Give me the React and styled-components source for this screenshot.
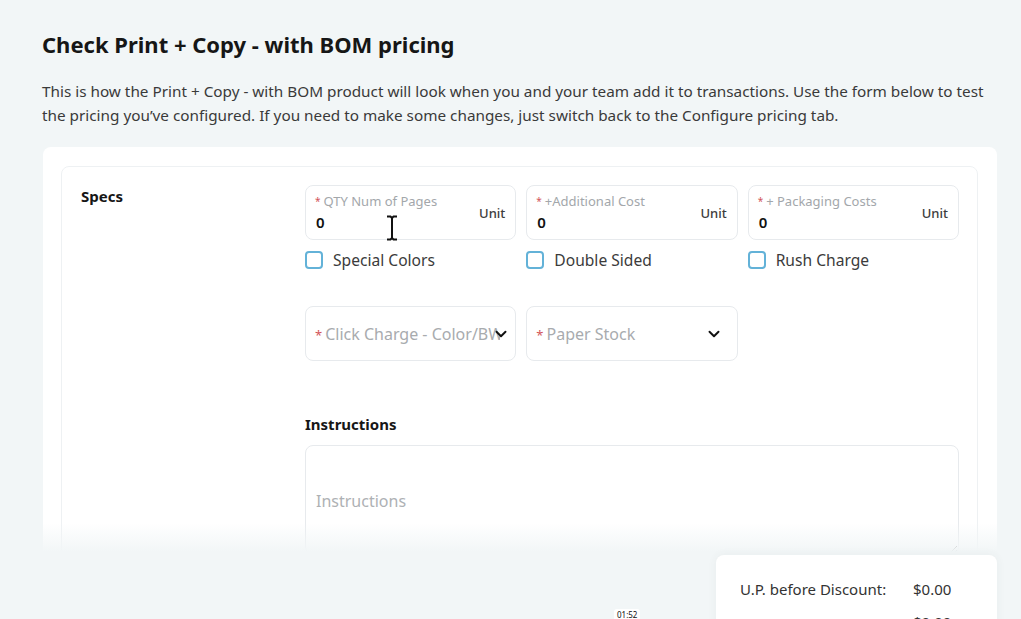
import React from 'react'
import styled, { createGlobalStyle } from 'styled-components'
import { ChevronDown } from 'lucide-react'

const GlobalStyle = createGlobalStyle`
  html, body {
    margin: 0;
    padding: 0;
    background: #f2f6f7;
  }
  body {
    font-family: "Noto Sans", "Liberation Sans", Arial, sans-serif;
    color: #1c1c1c;
  }
  * {
    box-sizing: border-box;
  }
`

const fields = [
  { label: 'QTY Num of Pages', value: '0', cursor: true },
  { label: '+Additional Cost', value: '0' },
  { label: '+ Packaging Costs', value: '0' }
]

const options = ['Special Colors', 'Double Sided', 'Rush Charge']

const selects = [
  { label: 'Click Charge - Color/BW', tight: true },
  { label: 'Paper Stock' }
]

class App extends React.Component {
  render() {
    return (
      <Page>
        <GlobalStyle />
        <Title>Check Print + Copy - with BOM pricing</Title>
        <Intro>
          This is how the Print + Copy - with BOM product will look when you and your team add it to
          transactions. Use the form below to test the pricing you’ve configured. If you need to make
          some changes, just switch back to the Configure pricing tab.
        </Intro>

        <Card>
          <Section>
            <SectionLabel>Specs</SectionLabel>
            <Form>
              <Row>
                {fields.map(f => (
                  <Field key={f.label}>
                    <FieldText>
                      <FieldLabel>
                        <Req>*</Req>
                        {f.label}
                      </FieldLabel>
                      <FieldValue>{f.value}</FieldValue>
                    </FieldText>
                    <Unit>Unit</Unit>
                    {f.cursor && (
                      <Cursor width="14" height="26" viewBox="0 0 14 26">
                        <path
                          d="M2 1.5h3.5L7 3l1.5-1.5H12M7 3v20M2 24.5h3.5L7 23l1.5 1.5H12"
                          fill="none"
                          stroke="#111"
                          strokeWidth="2"
                        />
                      </Cursor>
                    )}
                  </Field>
                ))}
              </Row>

              <Row $top="10px">
                {options.map(o => (
                  <Check key={o}>
                    <Box />
                    {o}
                  </Check>
                ))}
              </Row>

              <Row $top="36px">
                {selects.map(s => (
                  <Select key={s.label} $tight={s.tight}>
                    <SelectText>
                      <Req $big>*</Req>
                      {s.label}
                    </SelectText>
                    <ChevronDown size={18} strokeWidth={2.6} color="#111" />
                  </Select>
                ))}
              </Row>

              <SubTitle>Instructions</SubTitle>
              <Notes placeholder="Instructions" />
            </Form>
          </Section>
        </Card>

        <Summary>
          <SummaryRow>
            <span>U.P. before Discount:</span>
            <span>$0.00</span>
          </SummaryRow>
          <SummaryRow>
            <span />
            <span>$0.00</span>
          </SummaryRow>
        </Summary>

        <Clock>01:52</Clock>
      </Page>
    )
  }
}

export default App

const Page = styled.div`
  position: relative;
  height: 100vh;
  overflow: hidden;
  padding: 30px 24px 0 42px;
`

const Title = styled.h1`
  margin: 0;
  font-size: 22px;
  line-height: 28px;
  font-weight: 700;
  color: #161616;
`

const Intro = styled.p`
  margin: 21px 0 0;
  font-size: 15.3px;
  line-height: 24px;
  color: #3a3a3a;
`

const Card = styled.div`
  position: relative;
  margin: 20px 0 0 1px;
  height: 408px;
  overflow: hidden;
  background: #fff;
  border-radius: 8px 8px 0 0;
  padding: 19px 19px 0 18px;

  &::after {
    content: '';
    position: absolute;
    left: 0;
    right: 0;
    bottom: 0;
    height: 32px;
    background: linear-gradient(to bottom, rgba(242, 246, 247, 0), #f2f6f7 90%);
  }
`

const Section = styled.div`
  display: grid;
  grid-template-columns: 224px 1fr;
  border: 1px solid #eef1f3;
  border-radius: 8px;
  padding: 18px 18px 40px 19px;
`

const SectionLabel = styled.div`
  font-size: 15px;
  font-weight: 700;
  line-height: 22px;
  color: #161616;
`

const Form = styled.div`
  display: flex;
  flex-direction: column;
  min-width: 0;
`

const Row = styled.div`
  display: grid;
  grid-template-columns: repeat(3, minmax(0, 1fr));
  column-gap: 10px;
  margin-top: ${p => p.$top || '0'};
`

const Field = styled.div`
  position: relative;
  height: 55px;
  display: flex;
  align-items: center;
  justify-content: space-between;
  border: 1px solid #e7eaed;
  border-radius: 8px;
  padding: 0 10px 0 9px;
`

const FieldText = styled.div`
  display: flex;
  flex-direction: column;
  gap: 3px;
`

const FieldLabel = styled.div`
  font-size: 13px;
  line-height: 17px;
  color: #a3a7ab;
`

const Req = styled.span`
  color: #d2555a;
  font-size: ${p => (p.$big ? '13px' : '10px')};
  margin-right: 3px;
  vertical-align: ${p => (p.$big ? 'baseline' : '1px')};
`

const FieldValue = styled.div`
  font-size: 15px;
  line-height: 19px;
  font-weight: 600;
  color: #111;
  padding-left: 1px;
`

const Unit = styled.div`
  font-size: 13px;
  font-weight: 500;
  color: #3d3d3d;
`

const Cursor = styled.svg`
  position: absolute;
  left: 79px;
  top: 29px;
`

const Check = styled.label`
  display: flex;
  align-items: center;
  gap: 10px;
  height: 20px;
  font-size: 15.6px;
  color: #3b3b3b;
`

const Box = styled.span`
  width: 18px;
  height: 18px;
  border: 2px solid #63b2d8;
  border-radius: 4px;
  background: #fff;
`

const Select = styled.div`
  display: flex;
  align-items: center;
  height: 55px;
  border: 1px solid #e7eaed;
  border-radius: 8px;
  padding: 0 ${p => (p.$tight ? '5px' : '14px')} 0 9px;

  svg {
    flex-shrink: 0;
    margin-left: ${p => (p.$tight ? '-8px' : '0')};
  }
`

const SelectText = styled.div`
  flex: 1;
  min-width: 0;
  overflow: hidden;
  white-space: nowrap;
  font-size: 16px;
  color: #a8abae;
`

const SubTitle = styled.div`
  margin-top: 53px;
  font-size: 15px;
  font-weight: 700;
  line-height: 20px;
  color: #161616;
`

const Notes = styled.textarea`
  margin-top: 11px;
  height: 110px;
  resize: vertical;
  border: 1px solid #e7eaed;
  border-radius: 8px;
  padding: 44px 10px 0;
  font-family: inherit;
  font-size: 16px;
  outline: none;

  &::placeholder {
    color: #aeb1b4;
  }
`

const Summary = styled.div`
  position: absolute;
  left: 716px;
  top: 555px;
  width: 281px;
  height: 120px;
  background: #fff;
  border-radius: 8px;
  box-shadow: 0 0 10px rgba(60, 80, 90, 0.06);
  padding: 22px 24px 0;
  display: flex;
  flex-direction: column;
  gap: 9px;
`

const SummaryRow = styled.div`
  display: grid;
  grid-template-columns: 173px auto;
  font-size: 15px;
  line-height: 24px;
  color: #333;
`

const Clock = styled.div`
  position: absolute;
  left: 614px;
  top: 609px;
  padding: 1px 3px;
  background: #fff;
  border-radius: 3px;
  font-size: 8px;
  line-height: 10px;
  color: #111;
`
